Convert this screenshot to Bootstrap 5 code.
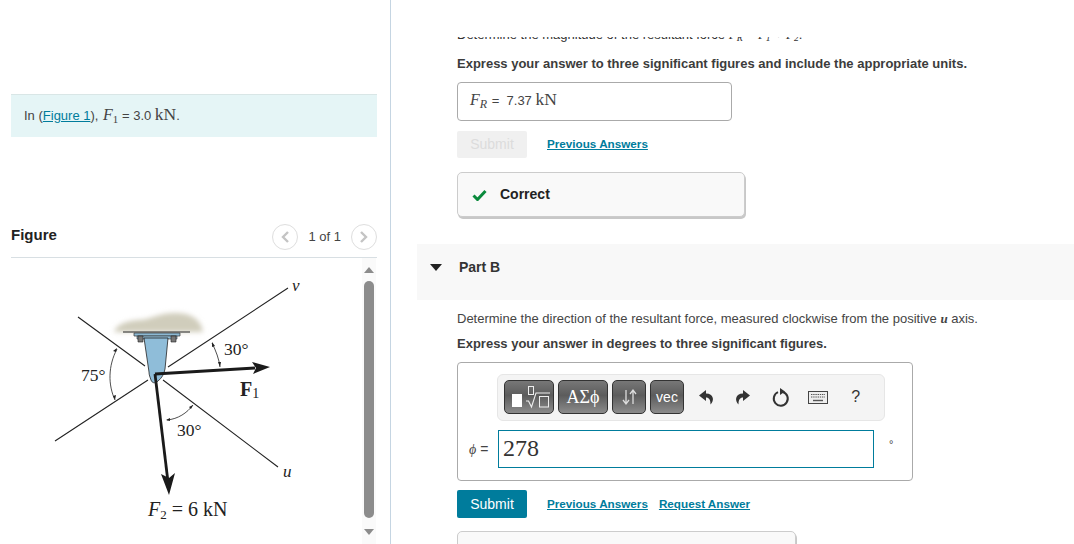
<!DOCTYPE html>
<html lang="en"><head><meta charset="utf-8"><title>Part B</title>
<link href="https://cdn.jsdelivr.net/npm/bootstrap@5.3.0/dist/css/bootstrap.min.css" rel="stylesheet">
<style>
html,body{height:544px;overflow:hidden;background:#fff}
body{font-family:"Liberation Sans",Arial,sans-serif;font-size:13px;color:#333}
.pane-left{width:391px;height:544px;flex:none;border-right:1px solid #c5d5e2;padding:94px 13px 0 11px}
.pane-right{flex:1;min-width:0;height:544px;overflow:hidden;padding-top:37px}
.infobox{height:43px;background:#e5f5f6;border-top:1px solid #d9e6e6;padding:0 13px 4px;display:flex;align-items:center;font-size:13px;color:#444}
.infobox a{color:#007c9c}
.fvar{font-size:16px;margin-left:1px}
.fsub{font-family:"Liberation Serif",serif;font-size:11px}
.fighead{height:121px;border-bottom:1px solid #d8dfe3;padding-bottom:7px}
.fighead h2{font-size:15px;font-weight:700;margin:0 0 6px;color:#222}
.pager{font-size:13px;color:#444;gap:10px}
.circ{width:26px;height:26px;border:1px solid #dedede;border-radius:50%;display:flex;align-items:center;justify-content:center}
.figbody{height:286px}
.figsvg{display:block;flex:none}
.sbar{width:14px;margin-left:-2px;background:#fafafa;padding-top:9px}
.sthumb{width:10px;height:237px;margin:8px auto 11px;background:#8c8c8c;border-radius:5px}
.tri-up,.tri-dn{width:0;height:0;margin:0 auto;border-left:5px solid transparent;border-right:5px solid transparent}
.tri-up{border-bottom:6px solid #8c8c8c}.tri-dn{border-top:6px solid #8c8c8c}
.inner{padding-left:66px}
.clipline{height:5px;overflow:hidden;display:flex;align-items:flex-end;font-size:13px;line-height:16px;color:#333}
.clipline>span{display:block;margin-bottom:-1px;white-space:nowrap}
.mathit{font-family:"Liberation Serif",serif;font-style:italic}
.unit{font-family:"Liberation Serif",serif;font-size:17.5px}
.prompt{font-weight:700;font-size:13px;color:#3c3c3c;line-height:16px}
.ansbox{width:275px;height:39px;border:1px solid #aaa;border-radius:4px;padding:0 12px 4px;margin-top:10px;font-size:13px;color:#444}
.rsub{font-size:12px;margin-right:1px}
.actrow{gap:20px}
.subbtn{width:70px;height:28px;border:0;border-radius:2px;font-size:14px;padding:0;background:#007c9c;color:#fff}
.subbtn:disabled{height:27px;background:#f0f0f0;color:#dcdcdc}
.lnk{color:#007c9c;font-weight:700;font-size:11.7px}
.lnk-top{margin-bottom:2px}
.correct{width:288px;height:45px;border:1px solid #ccc;border-radius:5px;background:#f9f9f9;box-shadow:1px 2px 0 #c8c8c8;padding-left:14px;gap:13px;font-weight:700;font-size:14px;color:#222;margin-top:14px}
.partband{height:56px;margin:27px 0 0 26px;background:#f8f8f8;padding:0 0 10px 13px;gap:17px;font-weight:700;font-size:14px;color:#333}
.partband i{width:0;height:0;border-left:6px solid transparent;border-right:6px solid transparent;border-top:7px solid #222;display:block}
.qtext{font-size:13px;line-height:16px;color:#444;margin-top:11px}
.editor{width:456px;height:119px;border:1px solid #aaa;border-radius:4px;margin-top:10px;padding:11px 0 0 11px}
.tbar{width:388px;height:47px;margin-left:28px;background:#f4f4f4;border:1px solid #e6e6e6;border-radius:6px;padding:5px 0 0 6px;gap:4px}
.tb{height:34px;border:1px solid #333;border-radius:5px;background:linear-gradient(#777,#5c5c5c 45%,#8b8b8b);color:#fff;display:flex;align-items:center;justify-content:center;padding:0;font-family:"Liberation Sans",sans-serif;font-size:14px}
.tb-a{width:50px}.tb-b{width:50px;font-family:"Liberation Serif",serif;font-size:18px}.tb-c{width:34px}.tb-d{width:34px}
.ticons{margin-left:-1px}
.ticon{width:37.5px;height:34px;display:flex;align-items:center;justify-content:center;color:#333;font-size:16px}
.eqrow{margin-top:9px;height:38px}
.eqlabel{width:29px;font-size:14px;color:#444;white-space:nowrap}
.mathinput{width:376px;height:38px;border:1px solid #007c9c;padding-left:4px;font-family:"Liberation Serif",serif;font-size:24px;line-height:35px;color:#333}
.deg{margin-left:15px;font-size:11px;color:#444;margin-top:-10px}
.nextbox{width:339px;height:20px;border:1px solid #ccc;border-radius:5px;background:#f9f9f9;margin-top:13px;box-shadow:1px 2px 0 #c8c8c8}
</style></head>
<body class="d-flex m-0">
<div class="pane-left">
 <div class="infobox"><span>In (<a href="#">Figure 1</a>),&nbsp;<span class="mathit fvar">F</span><sub class="fsub">1</sub>&nbsp;= 3.0&nbsp;<span class="unit">kN</span>.</span></div>
 <div class="fighead d-flex justify-content-between align-items-end">
  <h2>Figure</h2>
  <div class="pager d-flex align-items-center">
   <span class="circ"><svg width="10" height="14" viewBox="0 0 10 14"><path d="M8 2 3 7l5 5" fill="none" stroke="#c4c4c4" stroke-width="2.4"/></svg></span>
   <span>1 of 1</span>
   <span class="circ"><svg width="10" height="14" viewBox="0 0 10 14"><path d="M2 2l5 5-5 5" fill="none" stroke="#c4c4c4" stroke-width="2.4"/></svg></span>
  </div>
 </div>
 <div class="figbody d-flex">
  <svg class="figsvg" width="353" height="286" viewBox="11 258 353 286" font-family="Liberation Serif, serif" fill="#222">
   <defs><filter id="bl" x="-20%" y="-40%" width="140%" height="180%"><feGaussianBlur stdDeviation="2.5"/></filter></defs>
   <path d="M114 332c3-8 12-11 24-12 12 0 20-7 37-7 14 0 26 5 28 19z" fill="#d0cdbc" filter="url(#bl)"/>
   <path d="M123 332h67" stroke="#222" stroke-width="1.2"/>
   <path d="M134 333h46v3h-46z" fill="#8db9d3" stroke="#333" stroke-width=".7"/>
   <path d="M137 336h40v3h-40z" fill="#8db9d3" stroke="#333" stroke-width=".6"/>
   <path d="M138 336h5v6h-5zM171 336h5v6h-5z" fill="#777" stroke="#222" stroke-width=".6"/>
   <path d="M144 338h24l-3 31c-1 5-3 9-7 12-3 3-6 2-7-1-1-3-2-5-2-8z" fill="#8fbdd9" stroke="#222" stroke-width=".8"/>
   <g stroke="#222" stroke-width="1.1" fill="none">
    <path d="M55 441 148 380M168 367 288 288M78 317 145 366M163 380 278 467"/>
    <path d="M117 349c-9 17-9 36-2 51M212 343c4 8 7 16 8 24M167 420c11-1 20-7 26-15" stroke-width=".8"/>
   </g>
   <g fill="#222">
    <path d="M117 348l-4 3 3 1zM115 400l-2-4 3-1zM212 342l0 5 3-1zM220 367l-2-5 3 0zM166 420l4-2 0 3zM193 405l-4 2 2 2z"/>
   </g>
   <path d="M155 374 255 368" stroke="#1a1a1a" stroke-width="2.8"/>
   <path d="M252 362l18 5-17 7 3-6z" fill="#1a1a1a"/>
   <path d="M155 374 168 482" stroke="#1a1a1a" stroke-width="2.8"/>
   <path d="M161 474l8 21 6-22-6 5z" fill="#1a1a1a"/>
   <text x="81" y="381" font-size="17.5">75°</text>
   <text x="224" y="355" font-size="17.5">30°</text>
   <text x="177" y="436" font-size="17.5">30°</text>
   <text x="240" y="396" font-size="20" font-weight="700">F<tspan font-size="14" font-weight="400" dy="2">1</tspan></text>
   <text x="292" y="291" font-size="17" font-style="italic">v</text>
   <text x="283" y="477" font-size="17" font-style="italic">u</text>
   <text x="148" y="516" font-size="20"><tspan font-style="italic">F</tspan><tspan font-size="13" dy="3">2</tspan><tspan dy="-3"> = 6 kN</tspan></text>
  </svg>
  <div class="sbar"><div class="tri-up"></div><div class="sthumb"></div><div class="tri-dn"></div></div>
 </div>
</div>
<div class="pane-right">
 <div class="inner">
  <div class="clipline"><span>Determine the magnitude of the resultant force <span class="mathit">F<sub>R</sub> = F<sub>1</sub> + F<sub>2</sub></span>.</span></div>
  <div class="prompt" style="margin-top:14px">Express your answer to three significant figures and include the appropriate units.</div>
  <div class="ansbox d-flex align-items-center"><span><span class="mathit" style="font-size:16px">F</span><sub class="mathit rsub">R</sub>&nbsp;=&nbsp; 7.37 <span class="unit">kN</span></span></div>
  <div class="d-flex align-items-center actrow" style="margin-top:10px"><button class="subbtn" disabled>Submit</button><a class="lnk lnk-top" href="#">Previous Answers</a></div>
  <div class="correct d-flex align-items-center"><svg width="15" height="12" viewBox="0 0 15 12"><path d="M1.5 6.500 5.500 10.500 13.500 2" fill="none" stroke="#0a8a3c" stroke-width="3"/></svg><span>Correct</span></div>
 </div>
 <div class="partband d-flex align-items-center"><i></i><span>Part B</span></div>
 <div class="inner">
  <div class="qtext">Determine the direction of the resultant force, measured clockwise from the positive <span class="mathit fw-bold">u</span> axis.</div>
  <div class="prompt" style="margin-top:9px">Express your answer in degrees to three significant figures.</div>
  <div class="editor">
   <div class="tbar d-flex">
    <button class="tb tb-a"><svg width="46" height="26" viewBox="0 0 46 26"><rect x="6" y="10" width="10" height="13" fill="#fff"/><rect x="22.500" y="2.500" width="5" height="8" fill="none" stroke="#eee"/><path d="M20 17h2.500l3 6 4.500-14h14" fill="none" stroke="#eee" stroke-width="1.1"/><rect x="33.500" y="12.500" width="9" height="10.500" fill="none" stroke="#eee"/></svg></button>
    <button class="tb tb-b">ΑΣϕ</button>
    <button class="tb tb-c"><svg width="20" height="22" viewBox="0 0 20 22"><path d="M7 4v13M4 14l3 4 3-4M14 18V5M11 8l3-4 3 4" fill="none" stroke="#ddd" stroke-width="1.3"/></svg></button>
    <button class="tb tb-d">vec</button>
    <div class="d-flex ticons">
     <span class="ticon"><svg width="16" height="17" viewBox="0 0 16 17"><path d="M8 1 1 6.500 8 12V8.500c3 0 4.500 2 4.500 7 2-2 2.800-4.500 2.300-6.500C14 6 12 4.500 8 4.500z" fill="#333"/></svg></span>
     <span class="ticon"><svg width="16" height="17" viewBox="0 0 16 17"><path d="M8 1l7 5.500L8 12V8.500c-3 0-4.500 2-4.500 7-2-2-2.800-4.500-2.300-6.500C2 6 4 4.500 8 4.500z" fill="#333"/></svg></span>
     <span class="ticon"><svg width="18" height="19" viewBox="0 0 18 19"><path d="M6 4.200A7 7 0 1 0 11 4" fill="none" stroke="#333" stroke-width="2"/><path d="M8 0v7l5-3.500z" fill="#333"/></svg></span>
     <span class="ticon"><svg width="20" height="13" viewBox="0 0 20 13"><rect x=".5" y=".5" width="19" height="12" fill="#eee" stroke="#444"/><path d="M3 3.500h14M3 6h14" stroke="#555" stroke-width="1.200" stroke-dasharray="1.400 .8"/><path d="M5 9.500h10" stroke="#555" stroke-width="1.400"/></svg></span>
     <span class="ticon">?</span>
    </div>
   </div>
   <div class="eqrow d-flex align-items-center">
    <span class="eqlabel"><span class="mathit">ϕ</span> =</span>
    <div class="mathinput">278</div>
    <span class="deg">°</span>
   </div>
  </div>
  <div class="d-flex align-items-center actrow" style="margin-top:9px"><button class="subbtn">Submit</button><div class="d-flex" style="gap:11px"><a class="lnk" href="#">Previous Answers</a><a class="lnk" href="#">Request Answer</a></div></div>
  <div class="nextbox"></div>
 </div>
</div>
</body></html>
